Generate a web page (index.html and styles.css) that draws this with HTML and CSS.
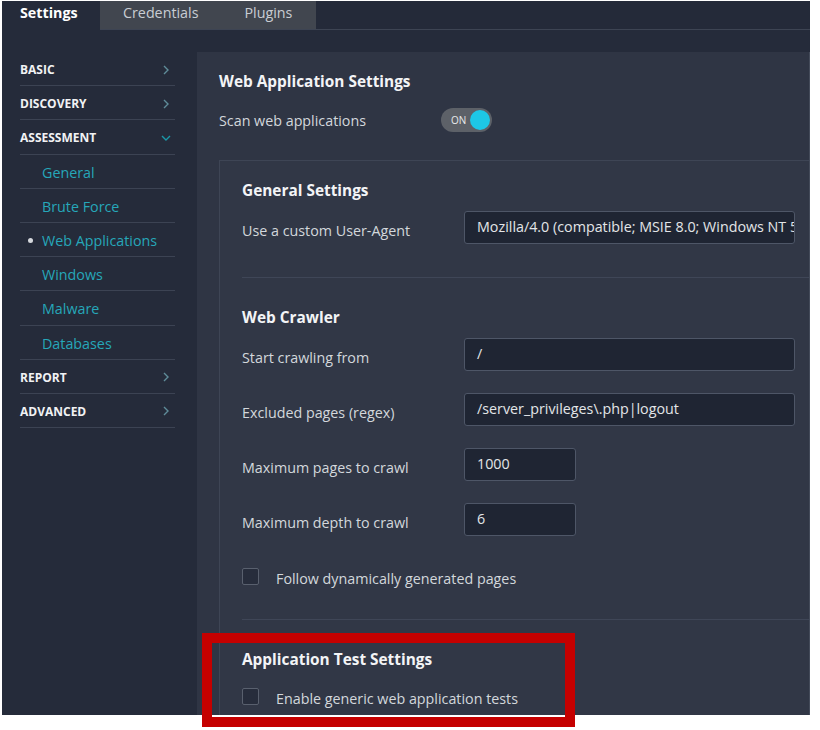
FILE: index.html
```html
<!DOCTYPE html>
<html>
<head>
<meta charset="utf-8">
<link rel="stylesheet" href="styles.css">
</head>
<body>
<div class="app">
  <div class="tabs">
    <div class="tab active">Settings</div>
    <div class="tab">Credentials</div>
    <div class="tab">Plugins</div>
    <div class="tab-fill"></div>
  </div>
  <div class="main">
    <nav class="sidebar">
      <div class="nav-item"><span>BASIC</span><svg class="chev" viewBox="0 0 6 10" width="6" height="10"><path d="M1 1l4 4-4 4" fill="none" stroke="currentColor" stroke-width="1.4"/></svg></div>
      <div class="nav-item"><span>DISCOVERY</span><svg class="chev" viewBox="0 0 6 10" width="6" height="10"><path d="M1 1l4 4-4 4" fill="none" stroke="currentColor" stroke-width="1.4"/></svg></div>
      <div class="nav-item"><span>ASSESSMENT</span><svg class="chev down" viewBox="0 0 10 6" width="10" height="6"><path d="M1 1l4 4 4-4" fill="none" stroke="currentColor" stroke-width="1.4"/></svg></div>
      <div class="nav-sub">General</div>
      <div class="nav-sub">Brute Force</div>
      <div class="nav-sub current">Web Applications</div>
      <div class="nav-sub">Windows</div>
      <div class="nav-sub">Malware</div>
      <div class="nav-sub">Databases</div>
      <div class="nav-item"><span>REPORT</span><svg class="chev" viewBox="0 0 6 10" width="6" height="10"><path d="M1 1l4 4-4 4" fill="none" stroke="currentColor" stroke-width="1.4"/></svg></div>
      <div class="nav-item"><span>ADVANCED</span><svg class="chev" viewBox="0 0 6 10" width="6" height="10"><path d="M1 1l4 4-4 4" fill="none" stroke="currentColor" stroke-width="1.4"/></svg></div>
    </nav>
    <section class="panel">
      <h1 class="panel-title">Web Application Settings</h1>
      <div class="scan-row">
        <span class="label">Scan web applications</span>
        <span class="toggle"><span class="toggle-text">ON</span><span class="knob"></span></span>
      </div>
      <div class="box">
        <div class="group first">
          <h2 class="group-title">General Settings</h2>
          <div class="row"><span class="label">Use a custom User-Agent</span><div class="input wide">Mozilla/4.0 (compatible; MSIE 8.0; Windows NT 5.1; Trident/4.0)</div></div>
        </div>
        <div class="group">
          <h2 class="group-title">Web Crawler</h2>
          <div class="row"><span class="label">Start crawling from</span><div class="input wide">/</div></div>
          <div class="row spaced"><span class="label">Excluded pages (regex)</span><div class="input wide">/server_privileges\.php|logout</div></div>
          <div class="row spaced"><span class="label">Maximum pages to crawl</span><div class="input short">1000</div></div>
          <div class="row spaced"><span class="label">Maximum depth to crawl</span><div class="input short">6</div></div>
          <div class="check-row spaced2"><span class="checkbox"></span><span class="label">Follow dynamically generated pages</span></div>
        </div>
        <div class="group last">
          <h2 class="group-title">Application Test Settings</h2>
          <div class="check-row"><span class="checkbox"></span><span class="label">Enable generic web application tests</span></div>
        </div>
      </div>
    </section>
  </div>
</div>
<div class="highlight"></div>
</body>
</html>
```
FILE: styles.css
```css
html, body {
  margin: 0;
  padding: 0;
  background: #ffffff;
}
body {
  width: 820px;
  height: 730px;
  position: relative;
  overflow: hidden;
  font-family: "Open Sans", "Liberation Sans", sans-serif;
}
.app {
  margin: 1px 0 0 2px;
  width: 808px;
  height: 714px;
  background: #252b3a;
  display: flex;
  flex-direction: column;
  overflow: hidden;
}
.tabs {
  display: flex;
  height: 29px;
  flex: none;
}
.tab {
  display: flex;
  align-items: center;
  padding: 0 23px 5px;
  background: #41464f;
  color: #c9cdd3;
  font-size: 14.3px;
  border-bottom: 1px solid #3d4453;
}
.tab.active {
  width: 98px;
  box-sizing: border-box;
  padding: 0 0 5px 18px;
  background: #252b3a;
  color: #ffffff;
  font-weight: 700;
  border-bottom-color: #252b3a;
}
.tab:nth-child(3) {
  padding-left: 23px;
  padding-right: 24px;
}
.tab-fill {
  flex: 1;
  background: #242a39;
  border-bottom: 1px solid #3d4453;
}
.main {
  flex: 1;
  display: flex;
  padding-top: 22px;
  min-height: 0;
}
.sidebar {
  width: 195px;
  flex: none;
  box-sizing: border-box;
  padding: 0 22px 0 18px;
}
.nav-item, .nav-sub {
  height: 34.2px;
  box-sizing: border-box;
  border-bottom: 1px solid #3c4353;
  display: flex;
  align-items: center;
  padding-top: 2px;
}
.nav-item {
  justify-content: space-between;
  color: #f1f2f4;
  font-size: 12px;
  font-weight: 700;
  padding-right: 6px;
}
.chev {
  color: #5f8c99;
}
.chev.down {
  color: #1a98a8;
  margin-right: -2px;
}
.nav-sub {
  color: #26a7b9;
  font-size: 14.3px;
  padding-left: 22px;
  position: relative;
}
.nav-sub.current::before {
  content: "";
  position: absolute;
  left: 8px;
  top: 15px;
  width: 5px;
  height: 5px;
  border-radius: 50%;
  background: #d5d8dd;
}
.panel {
  flex: 1;
  background: #2f3544;
  border-right: 1px solid #444b5a;
  padding: 20px 0 0 22px;
  overflow: hidden;
  min-width: 0;
}
.panel-title, .group-title {
  margin: 0;
  font-size: 15.4px;
  line-height: 20px;
  font-weight: 700;
  color: #f3f4f6;
}
.label {
  font-size: 14.3px;
  color: #d3d7dc;
}
.scan-row {
  display: flex;
  align-items: center;
  margin-top: 16px;
  height: 24px;
}
.scan-row .label {
  width: 222px;
}
.toggle {
  width: 51px;
  height: 24px;
  border-radius: 12px;
  background: #5d6168;
  display: flex;
  align-items: center;
  justify-content: space-between;
  padding: 0 2px 0 10px;
  box-sizing: border-box;
}
.toggle-text {
  font-size: 10px;
  color: #e8e9eb;
}
.knob {
  width: 20px;
  height: 20px;
  border-radius: 50%;
  background: #1dc7e6;
}
.box {
  margin-top: 28px;
  width: 640px;
  background: #313746;
  border: 1px solid #3e4555;
  border-right: none;
  height: 600px;
}
.group {
  margin-left: 22px;
  padding: 30px 0 26px 0;
  border-bottom: 1px solid #3f4657;
}
.group.first {
  padding: 20px 0 33px 0;
}
.group.last {
  border-bottom: none;
}
.row {
  display: flex;
  align-items: center;
  margin-top: 10px;
  height: 33px;
}
.row.spaced {
  margin-top: 22px;
}
.row .label {
  width: 222px;
  flex: none;
  padding-top: 6px;
}
.input {
  height: 33px;
  box-sizing: border-box;
  background: #1f2533;
  border: 1px solid #4e5667;
  border-radius: 3px;
  color: #e3e5e8;
  font-size: 14.3px;
  line-height: 20px;
  padding: 5px 12px;
  white-space: nowrap;
  overflow: hidden;
}
.input.wide {
  width: 331px;
}
.input.short {
  width: 112px;
}
.check-row {
  display: flex;
  align-items: center;
  height: 33px;
  margin-top: 10px;
}
.check-row.spaced2 {
  margin-top: 24px;
}
.check-row .label {
  padding-top: 3px;
}
.checkbox {
  width: 17px;
  height: 17px;
  box-sizing: border-box;
  border: 1px solid #59606e;
  background: #272d3c;
  border-radius: 2px;
  margin-right: 17px;
}
.highlight {
  position: absolute;
  left: 202px;
  top: 633px;
  width: 373px;
  height: 94px;
  box-sizing: border-box;
  border: 10px solid #c50000;
}
```
